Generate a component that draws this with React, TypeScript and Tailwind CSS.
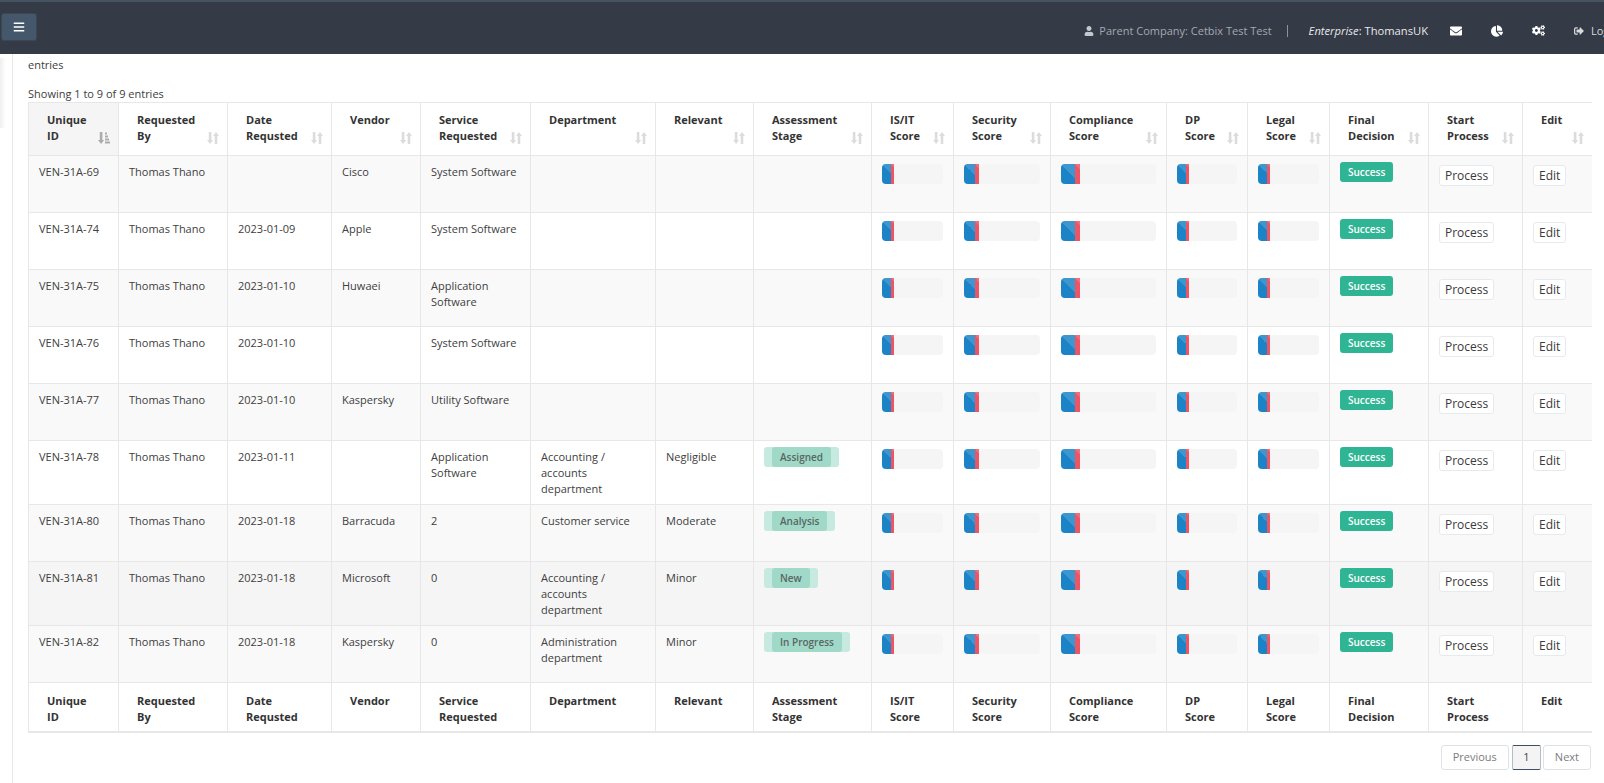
import { FaUser, FaEnvelope, FaChartPie, FaCogs, FaSignOutAlt, FaBars } from 'react-icons/fa';

const columns = [
  { label: ['Unique', 'ID'], width: 90 },
  { label: ['Requested', 'By'], width: 109 },
  { label: ['Date', 'Requsted'], width: 104 },
  { label: ['Vendor'], width: 89 },
  { label: ['Service', 'Requested'], width: 110 },
  { label: ['Department'], width: 125 },
  { label: ['Relevant'], width: 98 },
  { label: ['Assessment', 'Stage'], width: 118 },
  { label: ['IS/IT', 'Score'], width: 82 },
  { label: ['Security', 'Score'], width: 97 },
  { label: ['Compliance', 'Score'], width: 116 },
  { label: ['DP', 'Score'], width: 81 },
  { label: ['Legal', 'Score'], width: 82 },
  { label: ['Final', 'Decision'], width: 99 },
  { label: ['Start', 'Process'], width: 94 },
  { label: ['Edit'], width: 69 },
];

const rows = [
  { id: 'VEN-31A-69', date: '', vendor: 'Cisco', service: 'System Software', dept: '', relevant: '', stage: '', height: 57, bg: 'bg-[#f9f9f9]' },
  { id: 'VEN-31A-74', date: '2023-01-09', vendor: 'Apple', service: 'System Software', dept: '', relevant: '', stage: '', height: 57, bg: 'bg-white' },
  { id: 'VEN-31A-75', date: '2023-01-10', vendor: 'Huwaei', service: 'Application Software', dept: '', relevant: '', stage: '', height: 57, bg: 'bg-[#f9f9f9]' },
  { id: 'VEN-31A-76', date: '2023-01-10', vendor: '', service: 'System Software', dept: '', relevant: '', stage: '', height: 57, bg: 'bg-white' },
  { id: 'VEN-31A-77', date: '2023-01-10', vendor: 'Kaspersky', service: 'Utility Software', dept: '', relevant: '', stage: '', height: 57, bg: 'bg-[#f9f9f9]' },
  { id: 'VEN-31A-78', date: '2023-01-11', vendor: '', service: 'Application Software', dept: 'Accounting / accounts department', relevant: 'Negligible', stage: 'Assigned', height: 64, bg: 'bg-white' },
  { id: 'VEN-31A-80', date: '2023-01-18', vendor: 'Barracuda', service: '2', dept: 'Customer service', relevant: 'Moderate', stage: 'Analysis', height: 57, bg: 'bg-[#f9f9f9]' },
  { id: 'VEN-31A-81', date: '2023-01-18', vendor: 'Microsoft', service: '0', dept: 'Accounting / accounts department', relevant: 'Minor', stage: 'New', height: 64, bg: 'bg-[#f5f5f5]', hover: true },
  { id: 'VEN-31A-82', date: '2023-01-18', vendor: 'Kaspersky', service: '0', dept: 'Administration department', relevant: 'Minor', stage: 'In Progress', height: 57, bg: 'bg-[#f9f9f9]' },
];

const cellBorder = 'border border-[#e7e7e7] last:border-r-0';
const textCell = `${cellBorder} px-[10px] pt-2 align-top`;

// fat up/down arrows of the unsorted columns
function SortIcon() {
  return (
    <svg viewBox="0 0 12 12" className="absolute bottom-[11px] right-[8px] h-3 w-3 fill-[#dcdcdc]">
      <path d="M1.8 0h2.6v8h1.7L3.1 12 0 8h1.8z" />
      <path d="M9 0l3 4h-1.7v8H7.7V4H6z" />
    </svg>
  );
}

// sorted column: down arrow and growing bars
function SortedIcon() {
  return (
    <svg viewBox="0 0 12 12" className="absolute bottom-[11px] right-[8px] h-3 w-3 fill-[#acacac]">
      <path d="M1.8 0h2.6v8h1.7L3.1 12 0 8h1.8z" />
      <rect x="7" y="0.5" width="2" height="2" />
      <rect x="7" y="3.5" width="3" height="2" />
      <rect x="7" y="6.5" width="4" height="2" />
      <rect x="7" y="9.5" width="5" height="2" />
    </svg>
  );
}

function HeadCell({ label, index, sortable }: { label: string[]; index: number; sortable: boolean }) {
  return (
    <th
      className={`relative ${cellBorder} pb-0 pl-[18px] pr-2 text-left align-top font-bold leading-4 text-[#333] ${
        sortable ? 'pt-[9px]' : 'pt-[10px]'
      } ${sortable && index === 0 ? 'bg-[#f5f5f5]' : 'bg-white'}`}
    >
      {label.map((line) => (
        <div key={line}>{line}</div>
      ))}
      {sortable && (index === 0 ? <SortedIcon /> : <SortIcon />)}
    </th>
  );
}

function ScoreBar({ hover }: { hover?: boolean }) {
  return (
    <div className={`flex h-5 w-full overflow-hidden rounded-[4px] ${hover ? 'bg-transparent' : 'bg-[#f5f5f5]'}`}>
      <div className="h-full w-[15%] bg-[#1c84c6] bg-[linear-gradient(45deg,rgba(255,255,255,.15)_25%,transparent_25%,transparent_50%,rgba(255,255,255,.15)_50%,rgba(255,255,255,.15)_75%,transparent_75%,transparent)] bg-[length:40px_40px]" />
      <div className="h-full w-[5%] bg-[#ed5565] bg-[linear-gradient(45deg,rgba(255,255,255,.15)_25%,transparent_25%,transparent_50%,rgba(255,255,255,.15)_50%,rgba(255,255,255,.15)_75%,transparent_75%,transparent)] bg-[length:40px_40px]" />
    </div>
  );
}

function StageBadge({ text }: { text: string }) {
  return (
    <div className="-mt-[2px] w-fit rounded-[3px] bg-[#c6e9e0] px-2">
      <div className="rounded-[3px] bg-[#a0d9c8] px-2 text-[10px] font-semibold leading-5 text-[#5a6663]">{text}</div>
    </div>
  );
}

function OutlineButton({ text }: { text: string }) {
  return (
    <div className="w-fit rounded-[3px] border border-[#e7eaec] bg-white px-[5px] text-xs leading-[19px] text-[#3a3a3a]">{text}</div>
  );
}

export default function App() {
  return (
    <div className="flex h-[783px] w-[1604px] flex-col overflow-hidden bg-white font-['Open_Sans',sans-serif] text-[11px] text-[#404040]">
      <header className="flex h-[54px] shrink-0 items-center border-t-2 border-[#45525f] bg-[#343a46] pb-[2px] pl-px">
        <button className="flex h-7 w-9 items-center justify-center rounded-[3px] border border-[#3a4854] bg-[#45586b] text-white">
          <FaBars className="h-3 w-3" />
        </button>
        <div className="ml-auto flex items-center whitespace-nowrap pt-2">
          <FaUser className="mr-[5px] h-[10px] w-[10px] text-[#c4c8cc]" />
          <span className="text-[#a4a9b0]">Parent Company: Cetbix Test Test</span>
          <span className="mx-[15px] h-3 w-px bg-[#8d939b]" />
          <span className="ml-[6px] text-[11.2px] text-[#e8e9eb]">
            <em>Enterprise</em>: ThomansUK
          </span>
          <FaEnvelope className="ml-[22px] h-3 w-3 text-white" />
          <FaChartPie className="ml-[29px] h-3 w-3 text-white" />
          <FaCogs className="ml-[29px] h-[13px] w-[13px] text-white" />
          <FaSignOutAlt className="ml-[29px] h-[10px] w-[10px] text-[#d8dadd]" />
          <span className="ml-[7px] w-[13px] overflow-hidden text-[#d8dadd]">Logout</span>
        </div>
      </header>

      <div className="flex min-h-0 flex-1">
        <aside className="w-[13px] shrink-0 border-r border-[#e7e7e7]">
          <div className="mt-1 h-[70px] w-[6px] bg-gradient-to-r from-[#efefef] to-white" />
        </aside>

        <main className="min-w-0 flex-1 pl-[15px]">
          <div className="pt-[3px] leading-4">entries</div>
          <div className="mt-[13px] leading-4">Showing 1 to 9 of 9 entries</div>

          <table className="w-[1563px] table-fixed border-collapse">
            <colgroup>
              {columns.map((col) => (
                <col key={col.label.join(' ')} style={{ width: col.width }} />
              ))}
            </colgroup>
            <thead>
              <tr className="h-[53px]">
                {columns.map((col, i) => (
                  <HeadCell key={col.label.join(' ')} label={col.label} index={i} sortable />
                ))}
              </tr>
            </thead>
            <tbody className="leading-4">
              {rows.map((row) => (
                <tr key={row.id} className={row.bg} style={{ height: row.height }}>
                  <td className={textCell}>{row.id}</td>
                  <td className={textCell}>Thomas Thano</td>
                  <td className={textCell}>{row.date}</td>
                  <td className={textCell}>{row.vendor}</td>
                  <td className={textCell}>{row.service}</td>
                  <td className={textCell}>{row.dept}</td>
                  <td className={textCell}>{row.relevant}</td>
                  <td className={textCell}>{row.stage && <StageBadge text={row.stage} />}</td>
                  {[0, 1, 2, 3, 4].map((n) => (
                    <td key={n} className={textCell}>
                      <ScoreBar hover={row.hover} />
                    </td>
                  ))}
                  <td className={`${cellBorder} px-[10px] pt-[6px] align-top`}>
                    <div className="w-fit rounded-[3px] bg-[#2fb594] px-2 text-[10px] font-semibold leading-5 text-white">Success</div>
                  </td>
                  <td className={`${cellBorder} px-[10px] pt-[9px] align-top`}>
                    <OutlineButton text="Process" />
                  </td>
                  <td className={`${cellBorder} px-[10px] pt-[9px] align-top`}>
                    <OutlineButton text="Edit" />
                  </td>
                </tr>
              ))}
            </tbody>
            <tfoot>
              <tr className="h-[49px] border-b-2 border-[#e7e7e7]">
                {columns.map((col, i) => (
                  <HeadCell key={col.label.join(' ')} label={col.label} index={i} sortable={false} />
                ))}
              </tr>
            </tfoot>
          </table>

          <div className="mt-3 flex w-[1563px] justify-end text-[#7c7c7c]">
            <div className="flex h-[25px] items-center rounded-[3px] border border-[#dfe2e4] px-[11px]">Previous</div>
            <div className="ml-[3px] flex h-[25px] w-[29px] items-center justify-center rounded-[2px] border border-[#b4bcc4] border-y-[#3d4f61] bg-[#f4f4f4] text-[#444]">1</div>
            <div className="ml-[2px] flex h-[25px] items-center rounded-[3px] border border-[#dfe2e4] px-[11px]">Next</div>
          </div>
        </main>
      </div>
    </div>
  );
}
